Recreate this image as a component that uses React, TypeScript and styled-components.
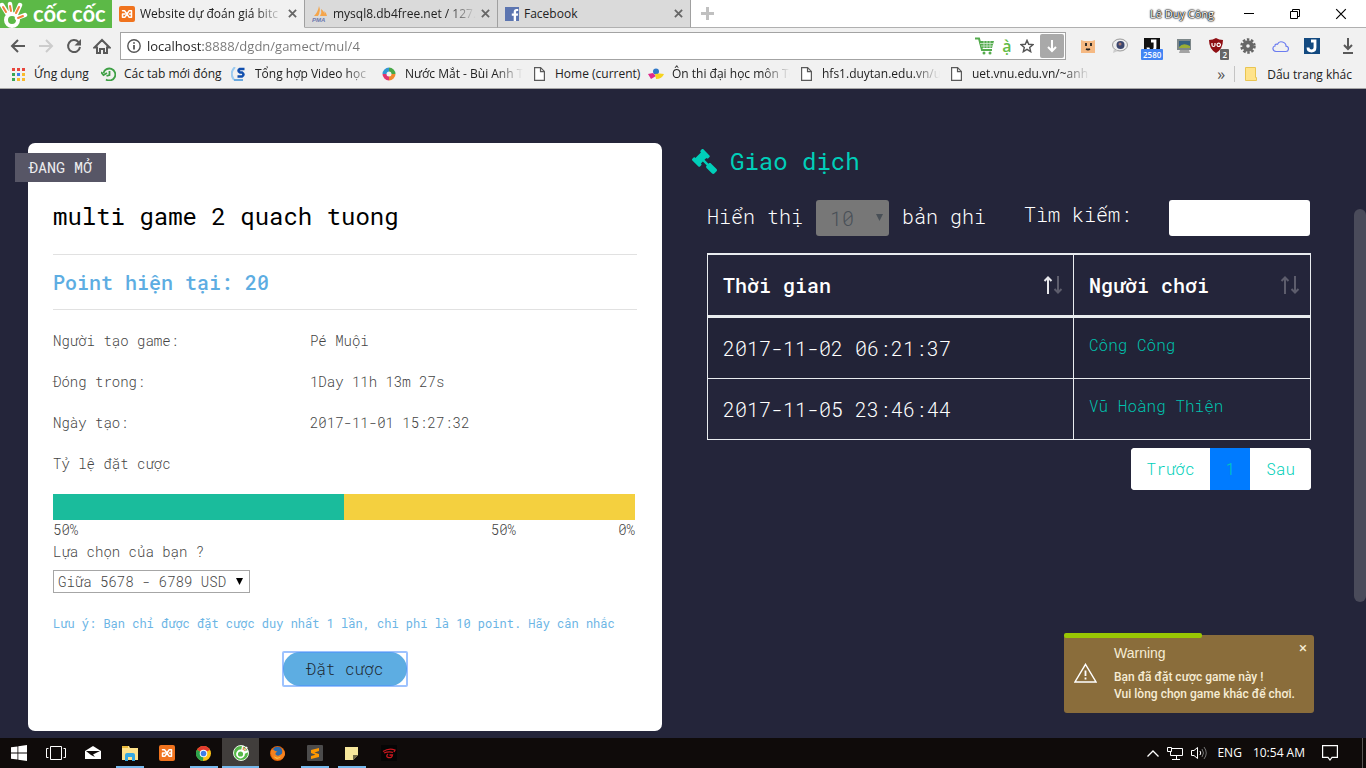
import React from "react";
import styled, { createGlobalStyle, css } from "styled-components";
import { FaGavel, FaFacebookF } from "react-icons/fa";

const mono = '"Roboto Mono", "Liberation Mono", monospace';
const ui = '"Segoe UI", "Open Sans", "Noto Sans", sans-serif';

const GlobalStyle = createGlobalStyle`
  *, *::before, *::after { box-sizing: border-box; }
  body { margin: 0; background: #24253a; font-family: ${mono}; }
  button, input, select { font: inherit; margin: 0; }
  button { border: 0; padding: 0; background: none; color: inherit; cursor: pointer; }
  a { color: inherit; text-decoration: none; }
  svg { display: block; flex: none; }
`;

const Screen = styled.div`
  min-height: 100vh;
  display: flex;
  flex-direction: column;
`;

/* ---------- browser chrome ---------- */

const Chrome = styled.header`
  font-family: ${ui};
  font-size: 12px;
  color: #222;
  background: #f1f1f1;
  border-bottom: 1px solid #a5a5a5;
`;

const TabStrip = styled.div`
  display: flex;
  align-items: stretch;
  height: 28px;
  background: #fff;
  border-bottom: 1px solid #b0b0b0;
`;

const Brand = styled.div`
  display: flex;
  align-items: center;
  width: 112px;
  height: 28px;
  gap: 5px;
  background: #5cb947;
  color: #fff;
  font: bold 22px/22px Lato, sans-serif;
  white-space: nowrap;
`;

const Tab = styled.div<{ $active?: boolean }>`
  display: flex;
  align-items: center;
  gap: 5px;
  width: 193px;
  height: 28px;
  padding: 0 7px;
  background: ${(p) => (p.$active ? "#f1f1f1" : "#dadada")};
  border-right: 1px solid #a0a0a0;
  border-bottom: 1px solid ${(p) => (p.$active ? "#f1f1f1" : "#b0b0b0")};
`;

const Fade = styled.span<{ $fade?: boolean }>`
  flex: 1;
  min-width: 0;
  white-space: nowrap;
  line-height: 20px;
  ${(p) =>
    p.$fade &&
    css`
      mask-image: linear-gradient(to right, #000 calc(100% - 28px), transparent);
    `}
`;

const IconButton = styled.button`
  display: flex;
  align-items: center;
  justify-content: center;
  flex: none;
`;

const NewTab = styled(IconButton)`
  width: 32px;
`;

const WindowControls = styled.div`
  display: flex;
  margin: 0 2px 0 auto;
`;

const UserName = styled.button`
  width: 68px;
  margin-right: 10px;
  font-size: 11px;
  color: #fff;
  white-space: nowrap;
  text-shadow: 0 0 1px #000, 0 0 1px #000, 0 0 2px #000, 0 0 2px #444;
`;

const WindowButton = styled(IconButton)`
  width: 46px;
`;

const Toolbar = styled.div`
  display: flex;
  align-items: center;
  height: 36px;
  padding: 0 2px 0 4px;
`;

const NavButton = styled(IconButton)`
  width: 28px;
  height: 28px;
`;

const AddressBar = styled.div`
  display: flex;
  align-items: center;
  flex: 1;
  height: 28px;
  margin: 0 6px 0 4px;
  padding: 0 1px 0 6px;
  gap: 6px;
  background: #fff;
  border: 1px solid #a3a3a3;
`;

const Address = styled.input`
  flex: 1;
  min-width: 0;
  height: 24px;
  padding: 0;
  border: 0;
  outline: 0;
  font-size: 13px;
  background: linear-gradient(to right, #222 56px, #777 56px);
  background-clip: text;
  -webkit-background-clip: text;
  -webkit-text-fill-color: transparent;
`;

const Accent = styled.button`
  width: 14px;
  font-size: 16px;
  font-weight: 600;
  line-height: 20px;
  color: #62bb46;
`;

const GrabButton = styled(IconButton)`
  width: 24px;
  height: 24px;
  border-radius: 2px;
  background: #a9a9a9;
`;

const Extension = styled(IconButton)`
  position: relative;
  width: 32px;
  height: 28px;
`;

const Downloads = styled(Extension)`
  margin-left: 4px;
`;

const Count = styled.span<{ $bg: string; $side?: boolean }>`
  position: absolute;
  bottom: 0;
  ${(p) => (p.$side ? "right: 3px;" : "left: 5px;")}
  padding: 0 2px;
  border-radius: 1px;
  background: ${(p) => p.$bg};
  color: #fff;
  font: 600 8px/11px ${ui};
`;

const Bookmarks = styled.nav`
  display: flex;
  align-items: center;
  height: 24px;
  padding: 0 14px 4px 10px;
`;

const Bookmark = styled.a<{ $w?: number }>`
  display: flex;
  align-items: center;
  gap: 8px;
  flex: none;
  width: ${(p) => (p.$w ? `${p.$w}px` : "auto")};
  padding-right: ${(p) => (p.$w === 150 ? "8px" : "0")};
`;

const IconBox = styled.span`
  display: flex;
  justify-content: center;
  width: 16px;
  flex: none;
`;

const More = styled.button`
  margin-left: auto;
  padding: 0 9px;
  font-size: 16px;
  line-height: 20px;
  color: #555;
`;

const Divider = styled.span`
  height: 16px;
  margin-right: 8px;
  border-left: 1px solid #c4c4c4;
`;

/* ---------- page ---------- */

const Page = styled.div`
  position: relative;
  flex: 1;
  display: flex;
  background: #24253a;
`;

const Main = styled.main`
  flex: 1;
  display: grid;
  grid-template-columns: 1fr 1fr;
  align-items: start;
  padding: 54px 13px 7px;
`;

const Rail = styled.div`
  width: 12px;
  padding-top: 120px;
`;

const Thumb = styled.div`
  height: 393px;
  border-radius: 6px;
  background: #4a4b5a;
`;

const Card = styled.section`
  position: relative;
  margin: 0 15px;
  padding: 55px 25px 45px;
  border-radius: 7px;
  background: #fff;
  color: #444;
  font-size: 14px;
  font-weight: 300;
`;

const Status = styled.span`
  position: absolute;
  left: -13px;
  top: 10px;
  padding: 0 14px;
  background: #575666;
  color: #ececee;
  font-size: 15px;
  font-weight: 400;
  line-height: 29px;
`;

const Title = styled.h1`
  margin: 0;
  padding-bottom: 20px;
  color: #000;
  font-size: 24px;
  font-weight: 400;
  line-height: 36px;
`;

const Points = styled.h2`
  margin: 0 0 10px;
  border: solid #e1e1e1;
  border-width: 1px 0;
  color: #5dade2;
  font-size: 20px;
  font-weight: 500;
  line-height: 54px;
`;

const Facts = styled.dl`
  display: grid;
  grid-template-columns: 44% 1fr;
  margin: 0;
  line-height: 41px;
  dd { margin: 0; }
`;

const Ratio = styled.div`
  display: flex;
  height: 26px;
  margin: 10px 2px 0 0;
  background: #f4d03f;
`;

const RatioFill = styled.div`
  background: #1abc9c;
`;

const RatioLabels = styled.div`
  display: flex;
  margin-right: 2px;
  line-height: 20px;
`;

const RatioLabel = styled.span<{ $grow?: boolean; $width?: string }>`
  flex: ${(p) => (p.$grow ? "1" : "none")};
  width: ${(p) => p.$width || "auto"};
  text-align: ${(p) => (p.$width ? "right" : "left")};
`;

const ChoiceLabel = styled.label`
  display: block;
  line-height: 24px;
`;

const selectArrow = (color: string) =>
  `url("data:image/svg+xml,%3Csvg xmlns='http://www.w3.org/2000/svg' width='7' height='8'%3E%3Cpath d='M0 0h7L3.500 7z' fill='${color}'/%3E%3C/svg%3E")`;

const Choice = styled.select`
  display: block;
  width: 197px;
  height: 23px;
  margin: 6px 0 20px;
  padding: 0 4px;
  appearance: none;
  border: 1px solid #a6a6a6;
  border-radius: 0;
  background: #fff ${selectArrow("%23000")} no-repeat right 6px center;
  color: #444;
`;

const Note = styled.p`
  margin: 0 0 19px;
  color: #6cb5e5;
  font-size: 12px;
  font-weight: 400;
  line-height: 20px;
`;

const FocusRing = styled.div`
  width: 124px;
  margin: 0 auto;
  border-radius: 1px;
  outline: 2px solid rgba(77, 144, 254, 0.55);
  outline-offset: -1px;
`;

const BetButton = styled.button`
  display: block;
  width: 100%;
  border-radius: 17px;
  background: #5dade2;
  color: #1f2a33;
  font-size: 16px;
  font-weight: 300;
  line-height: 34px;
`;

const Trades = styled.section`
  padding: 0 15px;
  color: #fff;
  font-size: 20px;
  font-weight: 300;
`;

const TradesTitle = styled.h2`
  display: flex;
  align-items: center;
  gap: 13px;
  margin: 0 0 21px;
  color: #00cfb9;
  font-size: 24px;
  font-weight: 400;
  line-height: 36px;
  svg { transform: scaleX(-1); }
`;

const TradesBody = styled.div`
  padding: 0 15px;
`;

const Filters = styled.div`
  display: flex;
  align-items: center;
  justify-content: space-between;
  margin-bottom: 17px;
`;

const LengthLabel = styled.label`
  display: flex;
  gap: 13px;
  line-height: 32px;
`;

const LengthSelect = styled.select`
  width: 73px;
  height: 36px;
  padding: 0 14px;
  appearance: none;
  border: 0;
  border-radius: 3px;
  background: #777 ${selectArrow("%23495057")} no-repeat right 6px center;
  color: #495057;
  font-weight: 300;
  opacity: 1;
`;

const SearchLabel = styled.label`
  display: flex;
  gap: 37px;
  line-height: 28px;
  padding-right: 1px;
`;

const SearchInput = styled.input`
  width: 141px;
  height: 36px;
  padding: 0 12px;
  border: 0;
  border-radius: 3px;
  background: #fff;
`;

const Table = styled.table`
  width: 100%;
  border-collapse: separate;
  border-spacing: 0;
  table-layout: fixed;
  border: solid #e9ecef;
  border-width: 1px 0 0 1px;
  line-height: 30px;
`;

const Th = styled.th<{ $w?: string }>`
  width: ${(p) => p.$w || "auto"};
  padding: 15px 10px 15px 15px;
  border: solid #e9ecef;
  border-width: 1px 1px 3px 0;
  color: #fff;
  font-weight: 500;
  text-align: left;
`;

const SortButton = styled.button`
  display: flex;
  align-items: center;
  justify-content: space-between;
  width: 100%;
`;

const Td = styled.td`
  padding: 15px;
  border: solid #e9ecef;
  border-width: 0 1px 1px 0;
  vertical-align: top;
`;

const Tr = styled.tr<{ $odd?: boolean }>`
  background: ${(p) => (p.$odd ? "#222337" : "transparent")};
`;

const Player = styled.a`
  display: block;
  color: #00c2ae;
  font-size: 16px;
  line-height: 24px;
`;

const Pager = styled.nav`
  display: flex;
  width: fit-content;
  margin: 8px 0 0 auto;
  overflow: hidden;
  border-radius: 4px;
  background: #fff;
  font-size: 16px;
`;

const PageLink = styled.a<{ $current?: boolean }>`
  padding: 0 16px;
  background: ${(p) => (p.$current ? "#007bff" : "#fff")};
  color: #00cfb9;
  line-height: 42px;
  & + & { margin-left: -1px; }
`;

const Toast = styled.aside`
  position: absolute;
  right: 52px;
  bottom: 25px;
  display: flex;
  width: 250px;
  padding: 8px 11px 10px 10px;
  gap: 17px;
  border-radius: 3px;
  background: #8a6d3b;
  color: #f6ecd4;
  font: 12px/17px Roboto, "Liberation Sans", sans-serif;
  svg { align-self: center; }
`;

const ToastProgress = styled.div`
  position: absolute;
  left: 0;
  top: -2px;
  height: 5px;
  border-radius: 2px;
  background: #99c703;
`;

const ToastTitle = styled.strong`
  display: block;
  margin-bottom: 6px;
  font: 14px/20px "Liberation Sans", Arial, sans-serif;
`;

const ToastText = styled.span`
  display: block;
  font-weight: 500;
  white-space: nowrap;
`;

const ToastClose = styled.button`
  position: absolute;
  right: 6px;
  top: 5px;
  width: 10px;
  font-size: 15px;
`;

/* ---------- desktop task bar ---------- */

const TaskBar = styled.footer`
  display: flex;
  align-items: stretch;
  height: 30px;
  background: #0f0b0a;
  color: #fff;
  font: 12px/30px ${ui};
`;

const Task = styled.button<{ $open?: boolean; $active?: boolean }>`
  display: flex;
  align-items: center;
  justify-content: center;
  width: 37px;
  height: 30px;
  background: ${(p) => (p.$active ? "#413e3c" : "none")};
  box-shadow: ${(p) => (p.$active ? "inset 0 -2px #76b9ed" : "none")};
  ${(p) =>
    p.$open &&
    css`
      background: linear-gradient(#76b9ed, #76b9ed) no-repeat center bottom / 28px 2px;
    `}
`;

const Tray = styled.div`
  display: flex;
  align-items: center;
  margin-left: auto;
  padding-right: 4px;
`;

const TrayGroup = styled.div`
  display: flex;
  align-items: center;
  gap: 8px;
  margin-right: 10px;
`;

const TrayText = styled.span`
  margin-right: 11px;
`;

const ActionCenter = styled(IconButton)`
  width: 28px;
  margin-right: 14px;
`;

const ShowDesktop = styled.span`
  height: 30px;
  border-left: 1px solid #5a5755;
  margin-right: 3px;
`;

/* ---------- drawings ---------- */

const Hand = () => (
  <svg width="28" height="28" viewBox="0 0 28 28" fill="none">
    <circle cx="12" cy="20" r="6" stroke="#fff" strokeWidth="4" />
    <path d="M2 5l5 8M10 4l1 8M20 5l-4 9M25 15l-8 3" stroke="#fff" strokeWidth="4.500" strokeLinecap="round" />
    <path d="M3 7l3 5M10 6l1 5M19 7l-3 6M23 16l-5 2" stroke="#f0803c" strokeWidth="2" strokeLinecap="round" />
  </svg>
);

const Xampp = () => (
  <svg width="16" height="16" viewBox="0 0 16 16" fill="none">
    <rect width="16" height="16" rx="2" fill="#f0731e" />
    <path
      d="M3.500 4.800h2L8 8l-2 3.200H3.500V8H6M8 8l2-3.200h2.500V8h-2M12.500 8v3.200H10L8 8"
      stroke="#fff"
      strokeWidth="1.500"
      strokeLinejoin="round"
      strokeLinecap="round"
    />
  </svg>
);

const Pma = () => (
  <svg width="16" height="16" viewBox="0 0 16 16">
    <path d="M7 0q2 5-1 10H2Q6 6 7 0zM9 3q4 3 4 7H8q2-3 1-7zM12 5q3 2 3 5h-2q0-3-1-5z" fill="#f5a54a" />
    <text x="0" y="16" fontFamily="Liberation Sans" fontSize="6" fontStyle="italic" fontWeight="bold" fill="#6c78af">PMA</text>
  </svg>
);

const Facebook = () => (
  <svg width="14" height="14" viewBox="0 0 14 14">
    <rect width="14" height="14" fill="#5c75b0" />
    <FaFacebookF x="4" y="2" width="10" height="12" color="#fff" />
  </svg>
);

const Cross = ({ color = "#666", size = 9, w = 2 }) => (
  <svg width={size} height={size} viewBox="0 0 10 10" stroke={color} strokeWidth={w}>
    <path d="M1 1l8 8M9 1L1 9" />
  </svg>
);

const Plus = () => (
  <svg width="13" height="13" viewBox="0 0 13 13" stroke="#c0c0c0" strokeWidth="3">
    <path d="M6.500 0v13M0 6.500h13" />
  </svg>
);

const Minimize = () => (
  <svg width="10" height="10" viewBox="0 0 10 10" stroke="#000"><path d="M0 4.500h10" /></svg>
);

const Restore = () => (
  <svg width="10" height="10" viewBox="0 0 10 10" stroke="#000" fill="none">
    <path d="M.5 2.500h7v7h-7zM2.500 2.500v-2h7v7h-2" />
  </svg>
);

const Arrow = ({ flip, color }: { flip?: boolean; color: string }) => (
  <svg width="16" height="16" viewBox="0 0 16 16" fill="none" stroke={color} strokeWidth="2">
    <path d={flip ? "M1 8h13M8 2l6 6-6 6" : "M15 8H2M8 2L2 8l6 6"} />
  </svg>
);

const Reload = () => (
  <svg width="16" height="16" viewBox="0 0 16 16" fill="none" stroke="#5a5a5a" strokeWidth="2">
    <path d="M12.500 4A6 6 0 1 0 14 9" />
    <path d="M15 1v6.500H8.500z" fill="#5a5a5a" stroke="none" />
  </svg>
);

const Home = () => (
  <svg width="18" height="17" viewBox="0 0 18 17" fill="none" stroke="#5a5a5a" strokeWidth="2">
    <path d="M1.500 9.500L9 2l7.500 7.500H14V15h-3v-4H7v4H4V9.500z" />
  </svg>
);

const Info = () => (
  <svg width="14" height="14" viewBox="0 0 14 14" fill="none" stroke="#555" strokeWidth="1.400">
    <circle cx="7" cy="7" r="6.200" />
    <path d="M7 6v4.500M7 3.300v1.500" strokeWidth="1.800" />
  </svg>
);

const Cart = () => (
  <svg width="19" height="18" viewBox="0 0 19 18" fill="none" stroke="#54ab4d">
    <path d="M0 1.500h4L7 13h10" strokeWidth="2" />
    <path d="M4 4h15l-2 7H6z" fill="#54ab4d" stroke="none" />
    <path d="M5 6.500h13M6 9h12M9 4v7M12 4v7M15 4v7" stroke="#d6ecd4" strokeWidth=".8" />
    <circle cx="9" cy="16" r="1.500" fill="#54ab4d" stroke="none" />
    <circle cx="15" cy="16" r="1.500" fill="#54ab4d" stroke="none" />
  </svg>
);

const Star = () => (
  <svg width="14" height="14" viewBox="0 0 14 14" fill="none" stroke="#555" strokeWidth="1.400">
    <path d="M7 1.300l1.700 4 4.300.3-3.300 2.800 1 4.300L7 10.400l-3.700 2.300 1-4.300L1 5.600l4.300-.3z" />
  </svg>
);

const Down = ({ color, bar }: { color: string; bar?: boolean }) => (
  <svg width="12" height="16" viewBox="0 0 12 16" fill="none" stroke={color} strokeWidth="2">
    <path d={bar ? "M6 0v11M2 7l4 4 4-4M1 15h10" : "M6 2v11M2 9l4 4 4-4"} />
  </svg>
);

const Fox = () => (
  <svg width="16" height="16" viewBox="0 0 16 16">
    <path d="M1 2l3 1h8l3-1v13H1z" fill="#f5b983" />
    <path d="M6 5v3M11 5v3M6 11q2 1 4 0" stroke="#222" strokeWidth="1.800" fill="none" />
  </svg>
);

const Bubble = () => (
  <svg width="16" height="16" viewBox="0 0 16 16">
    <ellipse cx="8" cy="7" rx="7.500" ry="6" fill="#eee" stroke="#999" />
    <path d="M2 11l-1 4 5-2z" fill="#ccc" />
    <circle cx="8.500" cy="7" r="4" fill="#3b466e" />
    <circle cx="8" cy="6" r="1.500" fill="#a97b72" />
  </svg>
);

const JBox = ({ bg }: { bg: string }) => (
  <svg width="16" height="16" viewBox="0 0 16 16">
    <rect width="16" height="16" fill={bg} />
    <path d="M7 3h4v6.500q0 3.500-3.500 3.500T4 9.500" fill="none" stroke="#fff" strokeWidth="2.800" />
  </svg>
);

const Monitor = () => (
  <svg width="16" height="16" viewBox="0 0 16 16">
    <rect x="1" y="1" width="14" height="11" fill="#7d8789" />
    <rect x="3" y="3" width="11" height="7" fill="#355f80" />
    <path d="M3 9q4-5 11-1v2H3z" fill="#9aad35" />
    <path d="M4 12h9l1 3H3z" fill="#a3a3a3" />
  </svg>
);

const Shield = () => (
  <svg width="16" height="16" viewBox="0 0 16 16">
    <path d="M8 0q3 2 7 2 0 9-7 13Q1 11 1 2q4 0 7-2z" fill="#8f0f14" />
    <path d="M4 5v2q0 1.500 1.500 1.500T7 7V5M9 6.800a1.700 1.700 0 1 0 3.400 0 1.700 1.700 0 1 0-3.400 0" fill="none" stroke="#fff" strokeWidth="1.200" />
  </svg>
);

const Gear = () => (
  <svg width="16" height="16" viewBox="0 0 16 16" fill="none" stroke="#666">
    <circle cx="8" cy="8" r="6.500" strokeWidth="2.500" strokeDasharray="2.500 1.600" />
    <circle cx="8" cy="8" r="3.800" strokeWidth="4" />
  </svg>
);

const Cloud = () => (
  <svg width="17" height="13" viewBox="0 0 17 13" fill="none" stroke="#6b7cf0" strokeWidth="1.200">
    <path d="M4 11.500h9.500a2.700 2.700 0 0 0 .5-5.400C14 2.500 7.500-.5 5.500 4.300 3.500 3.500 2.800 5 3 6 .2 6.500 0 11 4 11.500z" />
  </svg>
);

const Apps = () => (
  <svg width="13" height="13" viewBox="0 0 13 13">
    {["#e8453c", "#e8453c", "#e8453c", "#3aa757", "#3d7ff0", "#f9bb2d", "#3aa757", "#f9bb2d", "#f9bb2d"].map((c, i) => (
      <rect key={i} x={(i % 3) * 5} y={Math.floor(i / 3) * 5} width="3" height="3" fill={c} />
    ))}
  </svg>
);

const History = () => (
  <svg width="15" height="14" viewBox="0 0 15 14" fill="none" stroke="#3ea045" strokeWidth="1.800">
    <path d="M5 12.500A6 6 0 1 0 2.500 6M0 5l2.500 3L6 6" />
    <path d="M8.500 4v4l-3 1" />
  </svg>
);

const SLogo = () => (
  <svg width="16" height="15" viewBox="0 0 16 15">
    <path d="M4 0Q-2 6 3 13" stroke="#9ccbf0" strokeWidth="2" fill="none" />
    <path d="M13.500 2H9q-3 1.700 0 3.500h2q3 2 0 4H6.500" stroke="#114fae" strokeWidth="2.600" fill="none" />
    <path d="M3 12h9v2H3z" fill="#69a8de" />
  </svg>
);

const Ring = () => (
  <svg width="14" height="14" viewBox="0 0 14 14" fill="none" strokeWidth="4">
    <path d="M7 2.500A4.500 4.500 0 0 1 11.500 7" stroke="#47a847" />
    <path d="M11.500 7A4.500 4.500 0 0 1 7 11.500" stroke="#f28a2e" />
    <path d="M7 11.500A4.500 4.500 0 0 1 2.500 7" stroke="#e0366f" />
    <path d="M2.500 7A4.500 4.500 0 0 1 7 2.500" stroke="#3297d3" />
  </svg>
);

const Doc = () => (
  <svg width="11" height="14" viewBox="0 0 11 14" fill="#fff" stroke="#5a5a5a" strokeWidth="1.200">
    <path d="M.6.6h6l3.800 3.800v9H.6zM6.500.6v4h4" />
  </svg>
);

const Splash = () => (
  <svg width="16" height="12" viewBox="0 0 16 12">
    <path d="M0 6l5-1 3 3-5 3z" fill="#e0278c" />
    <circle cx="8" cy="3.500" r="3" fill="#2f78c8" />
    <path d="M7 6q5-1 9 0-2 5-8 5z" fill="#f6d31f" />
  </svg>
);

const Folder = () => (
  <svg width="12" height="14" viewBox="0 0 12 14">
    <path d="M.5.500h10v10h1v3H.5z" fill="#ffe38a" stroke="#e9c552" />
  </svg>
);

const SortArrows = ({ asc }: { asc?: boolean }) => (
  <svg width="20" height="18" viewBox="0 0 20 18" fill="none" strokeWidth="2">
    <path d="M5 18V2M1.500 5L5 1.500 8.500 5" stroke={asc ? "#e8e8ec" : "#5d5d6c"} />
    <path d="M15 0v16M11.500 13l3.500 3.500L18.500 13" stroke="#5d5d6c" />
  </svg>
);

const WarningSign = () => (
  <svg width="23" height="20" viewBox="0 0 23 20" fill="none" stroke="#fff" strokeWidth="1.400">
    <path d="M11.500 1.300L22 19H1z" />
    <path d="M11.500 7.500v5.500M11.500 14.500v2" strokeWidth="1.800" />
  </svg>
);

const Windows = () => (
  <svg width="16" height="16" viewBox="0 0 16 16" fill="#fff">
    <path d="M0 2.300l6.500-.9v6.100H0zM7.300 1.300L16 0v7.500H7.300zM0 8.400h6.500v6.200L0 13.700zM7.300 8.400H16V16l-8.700-1.300z" />
  </svg>
);

const TaskView = () => (
  <svg width="20" height="14" viewBox="0 0 20 14" fill="none" stroke="#fff">
    <path d="M4.500.5h11v13h-11zM2.500 2.500h-2v9h2M17.500 2.500h2v9h-2" />
  </svg>
);

const Mail = () => (
  <svg width="16" height="14" viewBox="0 0 16 14">
    <path d="M0 5l8-5 8 5v8H0z" fill="#fff" />
    <path d="M1 5h14L8 8.500l2 2.500-4-2z" fill="#0f0b0a" />
  </svg>
);

const Explorer = () => (
  <svg width="16" height="15" viewBox="0 0 16 15">
    <path d="M0 0h7l1 2h8v12H0z" fill="#ffe28a" />
    <path d="M0 0h6v2H0z" fill="#e9b93b" />
    <path d="M3 15V9q0-2 2-2h6q2 0 2 2v6h-3v-4H6v4z" fill="#36a9e1" />
  </svg>
);

const ChromeLogo = () => (
  <svg width="15" height="15" viewBox="0 0 16 16">
    <circle cx="8" cy="8" r="8" fill="#fbc116" />
    <path d="M8 8L1 4a8 8 0 0 1 14 0z" fill="#e33b2e" />
    <path d="M8 8L1 4a8 8 0 0 0 6.500 12z" fill="#2ba24c" />
    <circle cx="8" cy="8" r="4" fill="#fff" />
    <circle cx="8" cy="8" r="3" fill="#3e7de8" />
  </svg>
);

const CocCoc = () => (
  <svg width="16" height="16" viewBox="0 0 16 16" fill="none">
    <circle cx="8" cy="8" r="7.500" fill="#55b948" stroke="#e8f5e6" />
    <circle cx="7.500" cy="9" r="3.500" stroke="#fff" strokeWidth="1.800" />
    <path d="M9 6l1-5M10 7l4-5M11 8l4-2" stroke="#fff" strokeWidth="2" />
    <path d="M10 5l.5-3M11 6l2-3" stroke="#f0803c" />
  </svg>
);

const Firefox = () => (
  <svg width="15" height="15" viewBox="0 0 16 16">
    <circle cx="8" cy="8" r="8" fill="#e66000" />
    <circle cx="8" cy="6" r="5.300" fill="#2a6aad" />
    <path d="M1 4q3-1 4 1l3 1q-3 1-2 3 3 3 7-1 1-3-1-6 4 3 4 7-2 6-8 6-7-1-7-8z" fill="#f58220" />
    <path d="M4 11q4 3 8 0-2 3-5 2.500Q5 13 4 11z" fill="#ffcb3d" />
  </svg>
);

const Sublime = () => (
  <svg width="16" height="16" viewBox="0 0 16 16">
    <rect width="16" height="16" rx="1" fill="#4b4b4b" />
    <path d="M12 3v3L7.500 7.500 12 9v3l-8 2v-3l4.500-1.200L4 8V5z" fill="#ff9800" />
  </svg>
);

const Sticky = () => (
  <svg width="13" height="13" viewBox="0 0 13 13">
    <path d="M0 0h13v8l-5 5H0z" fill="#f6e79c" />
    <path d="M13 8l-5 5V8z" fill="#6e6745" />
  </svg>
);

const Garena = () => (
  <svg width="16" height="16" viewBox="0 0 16 16" fill="none" stroke="#c8171e" strokeWidth="1.300">
    <rect width="16" height="16" fill="#050505" stroke="none" />
    <path d="M2 6.500q6-4 12-1.500l-1 2M3 8q5-2 9-.5M7 9q-2.500 2 0 3.500 4 1 4.500-2.500H8.500" />
  </svg>
);

const Chevron = () => (
  <svg width="12" height="7" viewBox="0 0 12 7" fill="none" stroke="#fff" strokeWidth="1.300"><path d="M.5 6.500L6 1l5.500 5.500" /></svg>
);

const Network = () => (
  <svg width="16" height="14" viewBox="0 0 16 14" fill="none" stroke="#fff">
    <path d="M5 2.500h10.500v7h-12V6M.5 1.500h4v4h-4zM9.500 10v3M5 13.500h8" />
  </svg>
);

const Speaker = () => (
  <svg width="16" height="14" viewBox="0 0 16 14" fill="none" stroke="#fff">
    <path d="M.5 4.500H3l3.500-3v11L3 9.500H.5zM9 5q1.500 2 0 4" />
    <path d="M11 3q3 4 0 8M13 1q4.500 6 0 12" stroke="#777" />
  </svg>
);

const Notice = () => (
  <svg width="16" height="17" viewBox="0 0 16 17" fill="none" stroke="#fff" strokeWidth="1.200">
    <path d="M.6.600h14.800v11.800H10L8 15l-2-2.600H.6z" />
  </svg>
);

const bookmarks = [
  { icon: <Apps />, text: "Ứng dụng", w: 90 },
  { icon: <History />, text: "Các tab mới đóng", w: 131 },
  { icon: <SLogo />, text: "Tổng hợp Video học", w: 150 },
  { icon: <Ring />, text: "Nước Mắt - Bùi Anh T", w: 150 },
  { icon: <Doc />, text: "Home (current)", w: 117 },
  { icon: <Splash />, text: "Ôn thi đại học môn To", w: 150 },
  { icon: <Doc />, text: "hfs1.duytan.edu.vn/u", w: 150 },
  { icon: <Doc />, text: "uet.vnu.edu.vn/~anh", w: 150 },
];

const extensions = [
  { name: "Fox", icon: <Fox /> },
  { name: "Chat", icon: <Bubble /> },
  { name: "J counter", icon: <JBox bg="#111" />, count: "2580", bg: "#4285f4" },
  { name: "Monitor", icon: <Monitor /> },
  { name: "Blocker", icon: <Shield />, count: "2", bg: "#666" },
  { name: "Settings", icon: <Gear /> },
  { name: "Cloud", icon: <Cloud /> },
  { name: "J tools", icon: <JBox bg="#134a80" /> },
];

const facts = [
  ["Người tạo game:", "Pé Muội"],
  ["Đóng trong:", "1Day 11h 13m 27s"],
  ["Ngày tạo:", "2017-11-01 15:27:32"],
  ["Tỷ lệ đặt cược", ""],
];

const trades = [
  ["2017-11-02 06:21:37", "Công Công"],
  ["2017-11-05 23:46:44", "Vũ Hoàng Thiện"],
];

const tasks = [
  { name: "Start", icon: <Windows /> },
  { name: "Task View", icon: <TaskView /> },
  { name: "Mail", icon: <Mail /> },
  { name: "Explorer", icon: <Explorer />, open: true },
  { name: "XAMPP", icon: <Xampp /> },
  { name: "Chrome", icon: <ChromeLogo />, open: true },
  { name: "Cốc Cốc", icon: <CocCoc />, active: true },
  { name: "Firefox", icon: <Firefox /> },
  { name: "Sublime Text", icon: <Sublime />, open: true },
  { name: "Sticky Notes", icon: <Sticky />, open: true },
  { name: "Garena", icon: <Garena /> },
];

export default function App() {
  const firstShare = 50;
  const toastProgress = 55;

  return (
    <Screen>
      <GlobalStyle />
      <Chrome>
        <TabStrip>
          <Brand><Hand />cốc cốc</Brand>
          <Tab $active>
            <Xampp />
            <Fade $fade>Website dự đoán giá bitc</Fade>
            <IconButton aria-label="Close tab"><Cross /></IconButton>
          </Tab>
          <Tab>
            <Pma />
            <Fade $fade>mysql8.db4free.net / 127.</Fade>
            <IconButton aria-label="Close tab"><Cross /></IconButton>
          </Tab>
          <Tab>
            <Facebook />
            <Fade>Facebook</Fade>
            <IconButton aria-label="Close tab"><Cross /></IconButton>
          </Tab>
          <NewTab aria-label="New tab"><Plus /></NewTab>
          <WindowControls>
            <UserName>Lê Duy Công</UserName>
            <WindowButton aria-label="Minimize"><Minimize /></WindowButton>
            <WindowButton aria-label="Restore"><Restore /></WindowButton>
            <WindowButton aria-label="Close"><Cross color="#000" size={12} w={1} /></WindowButton>
          </WindowControls>
        </TabStrip>
        <Toolbar>
          <NavButton aria-label="Back"><Arrow color="#5a5a5a" /></NavButton>
          <NavButton aria-label="Forward"><Arrow flip color="#ccc" /></NavButton>
          <NavButton aria-label="Reload"><Reload /></NavButton>
          <NavButton aria-label="Home"><Home /></NavButton>
          <AddressBar>
            <Info />
            <Address aria-label="Address" defaultValue="localhost:8888/dgdn/gamect/mul/4" />
            <IconButton aria-label="Shopping"><Cart /></IconButton>
            <Accent>ạ̀</Accent>
            <IconButton aria-label="Bookmark this page"><Star /></IconButton>
            <GrabButton aria-label="Save media"><Down color="#fff" /></GrabButton>
          </AddressBar>
          {extensions.map((e) => (
            <Extension key={e.name} aria-label={e.name}>
              {e.icon}
              {e.count && <Count $bg={e.bg!} $side={e.count.length === 1}>{e.count}</Count>}
            </Extension>
          ))}
          <Downloads aria-label="Downloads"><Down color="#5a5a5a" bar /></Downloads>
        </Toolbar>
        <Bookmarks>
          {bookmarks.map((b) => (
            <Bookmark key={b.text} href="#" $w={b.w}>
              <IconBox>{b.icon}</IconBox>
              <Fade $fade={b.w === 150}>{b.text}</Fade>
            </Bookmark>
          ))}
          <More>»</More>
          <Divider />
          <Bookmark href="#">
            <IconBox><Folder /></IconBox>
            <span>Dấu trang khác</span>
          </Bookmark>
        </Bookmarks>
      </Chrome>

      <Page>
        <Main>
          <Card>
            <Status>ĐANG MỞ</Status>
            <Title>multi game 2 quach tuong</Title>
            <Points>Point hiện tại: 20</Points>
            <Facts>
              {facts.map(([k, v]) => (
                <React.Fragment key={k}>
                  <dt>{k}</dt>
                  <dd>{v}</dd>
                </React.Fragment>
              ))}
            </Facts>
            <Ratio><RatioFill style={{ width: `${firstShare}%` }} /></Ratio>
            <RatioLabels>
              <RatioLabel $grow>50%</RatioLabel>
              <RatioLabel>50%</RatioLabel>
              <RatioLabel $width="119px">0%</RatioLabel>
            </RatioLabels>
            <ChoiceLabel htmlFor="choice">Lựa chọn của bạn ?</ChoiceLabel>
            <Choice id="choice"><option>Giữa 5678 - 6789 USD</option></Choice>
            <Note>Lưu ý: Bạn chỉ được đặt cược duy nhất 1 lần, chi phí là 10 point. Hãy cân nhắc</Note>
            <FocusRing><BetButton>Đặt cược</BetButton></FocusRing>
          </Card>

          <Trades>
            <TradesTitle><FaGavel size={25} />Giao dịch</TradesTitle>
            <TradesBody>
              <Filters>
                <LengthLabel>
                  Hiển thị
                  <LengthSelect disabled><option>10</option></LengthSelect>
                  bản ghi
                </LengthLabel>
                <SearchLabel>Tìm kiếm:<SearchInput type="search" /></SearchLabel>
              </Filters>
              <Table>
                <thead>
                  <tr>
                    <Th $w="366px"><SortButton>Thời gian<SortArrows asc /></SortButton></Th>
                    <Th><SortButton>Người chơi<SortArrows /></SortButton></Th>
                  </tr>
                </thead>
                <tbody>
                  {trades.map(([time, player], i) => (
                    <Tr key={time} $odd={i % 2 === 0}>
                      <Td>{time}</Td>
                      <Td><Player href="#">{player}</Player></Td>
                    </Tr>
                  ))}
                </tbody>
              </Table>
              <Pager>
                <PageLink href="#">Trước</PageLink>
                <PageLink href="#" $current>1</PageLink>
                <PageLink href="#">Sau</PageLink>
              </Pager>
            </TradesBody>
          </Trades>
        </Main>
        <Rail><Thumb /></Rail>
        <Toast role="alert">
          <ToastProgress style={{ width: `${toastProgress}%` }} />
          <WarningSign />
          <div>
            <ToastTitle>Warning</ToastTitle>
            <ToastText>Bạn đã đặt cược game này !</ToastText>
            <ToastText>Vui lòng chọn game khác để chơi.</ToastText>
          </div>
          <ToastClose aria-label="Dismiss">×</ToastClose>
        </Toast>
      </Page>

      <TaskBar>
        {tasks.map((t) => (
          <Task key={t.name} aria-label={t.name} $open={t.open} $active={t.active}>{t.icon}</Task>
        ))}
        <Tray>
          <TrayGroup><Chevron /><Network /><Speaker /></TrayGroup>
          <TrayText>ENG</TrayText>
          <TrayText>10:54 AM</TrayText>
          <ActionCenter aria-label="Notifications"><Notice /></ActionCenter>
        </Tray>
        <ShowDesktop />
      </TaskBar>
    </Screen>
  );
}
